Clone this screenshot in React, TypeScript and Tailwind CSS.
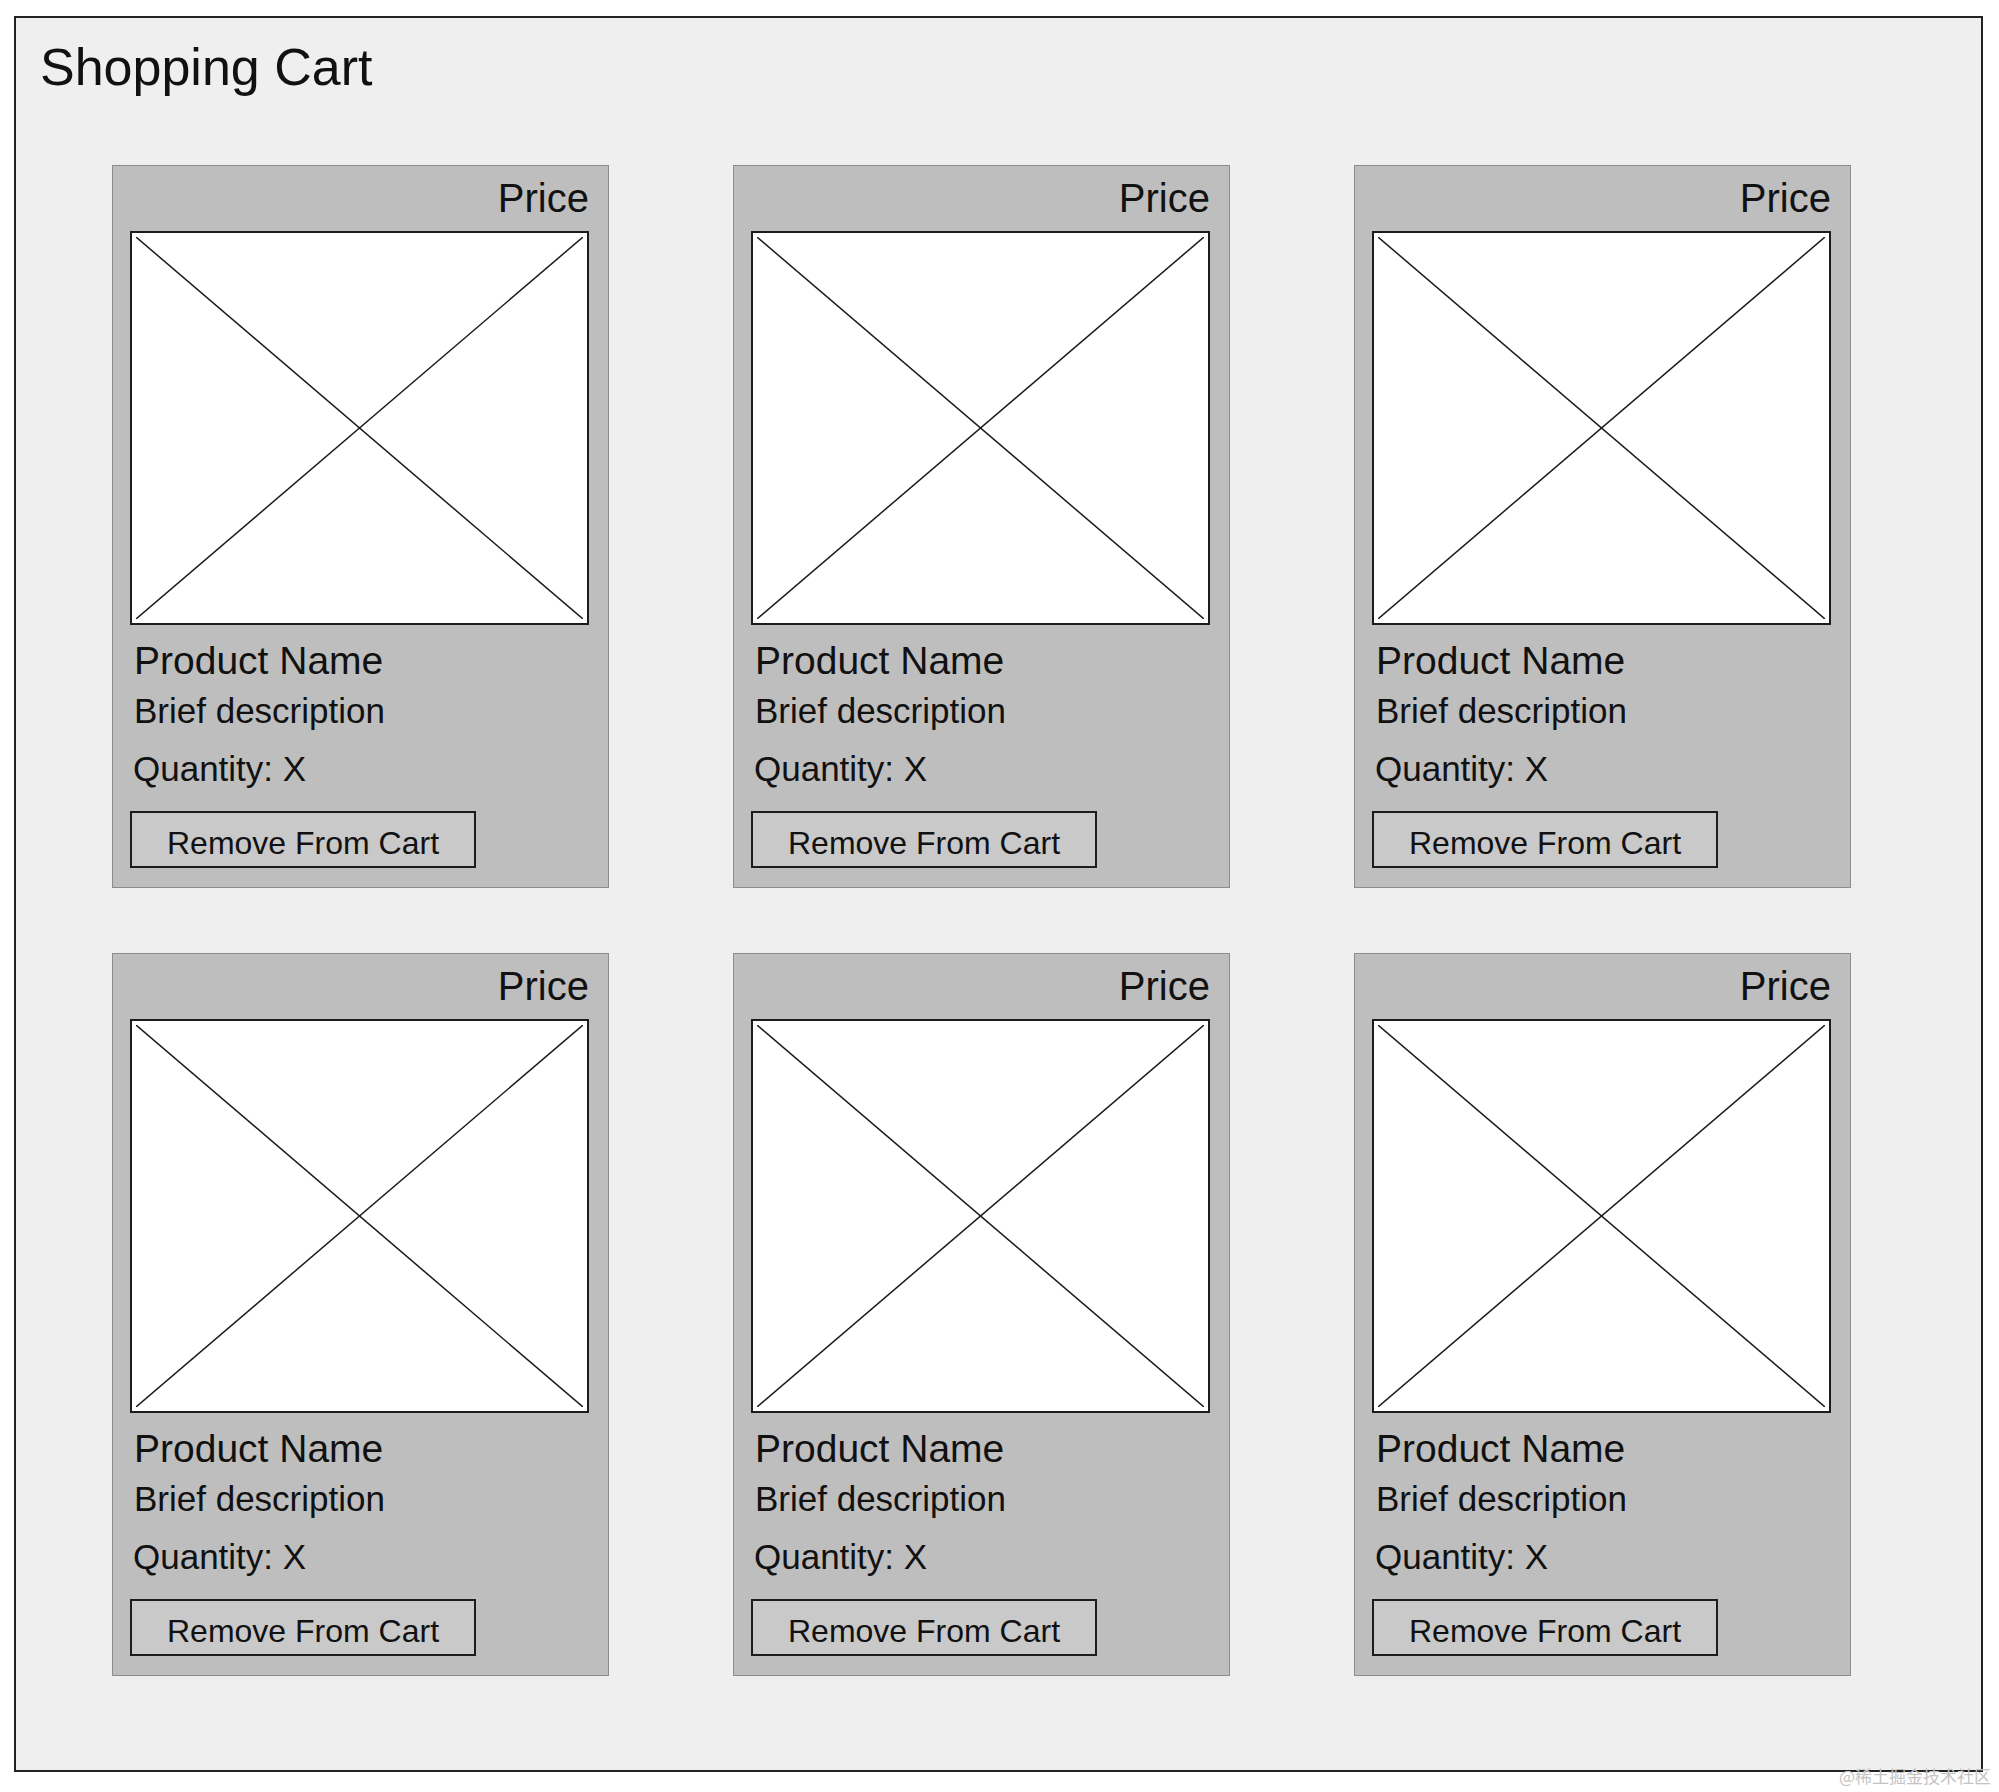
const font = "font-['Liberation_Sans',Arial,sans-serif]";

const items = Array.from({ length: 6 }, (_, i) => ({
  id: i,
  name: "Product Name",
  description: "Brief description",
  quantity: "X",
}));

function Placeholder() {
  return (
    <div className="relative h-[394px] w-full border-2 border-[#1c1c1c] bg-white">
      <svg
        className="absolute inset-[4px] h-[calc(100%-8px)] w-[calc(100%-8px)]"
        viewBox="0 0 100 100"
        preserveAspectRatio="none"
      >
        <line x1="0" y1="0" x2="100" y2="100" stroke="#1a1a1a" strokeWidth="1.5" vectorEffect="non-scaling-stroke" />
        <line x1="100" y1="0" x2="0" y2="100" stroke="#1a1a1a" strokeWidth="1.5" vectorEffect="non-scaling-stroke" />
      </svg>
    </div>
  );
}

function CartItem({ name, description, quantity }: { name: string; description: string; quantity: string }) {
  return (
    <div className="flex h-[723px] w-[497px] flex-col border border-[#8c8c8c] bg-[#bebebe] pb-[18px] pl-[17px] pr-[19px] pt-[12px]">
      <p className="text-right text-[40px] leading-[40px] text-[#111]">Price</p>
      <div className="mt-[13px]">
        <Placeholder />
      </div>
      <p className="mt-[16px] pl-[4px] text-[39px] leading-[39px] text-[#111]">{name}</p>
      <p className="mt-[13px] pl-[4px] text-[35px] leading-[35px] text-[#111]">{description}</p>
      <p className="mt-[23px] pl-[3px] text-[35px] leading-[35px] text-[#111]">Quantity: {quantity}</p>
      <button
        type="button"
        className="mt-[25px] flex h-[57px] w-[346px] items-center justify-center border-2 border-[#1c1c1c] bg-[#c9c9c9] pt-[6px] text-[32px] leading-[32px] text-[#111]"
      >
        Remove From Cart
      </button>
    </div>
  );
}

export default function App() {
  return (
    <div className={`relative h-[1792px] w-[1999px] bg-white pl-[14px] pt-[16px] ${font}`}>
      <div className="h-[1756px] w-[1969px] border-2 border-[#222] bg-[#efefef] pl-[96px] pt-[23px]">
        <h1 className="-ml-[72px] text-[52px] leading-[52px] text-[#111]">Shopping Cart</h1>
        <div className="mt-[72px] grid grid-cols-[repeat(3,497px)] gap-x-[124px] gap-y-[65px]">
          {items.map((item) => (
            <CartItem key={item.id} {...item} />
          ))}
        </div>
      </div>
      <span className="absolute bottom-[6px] right-[8px] font-['Noto_Sans_CJK_SC',sans-serif] text-[17px] leading-[20px] text-[#c4c4c4]">
        @稀土掘金技术社区
      </span>
    </div>
  );
}
